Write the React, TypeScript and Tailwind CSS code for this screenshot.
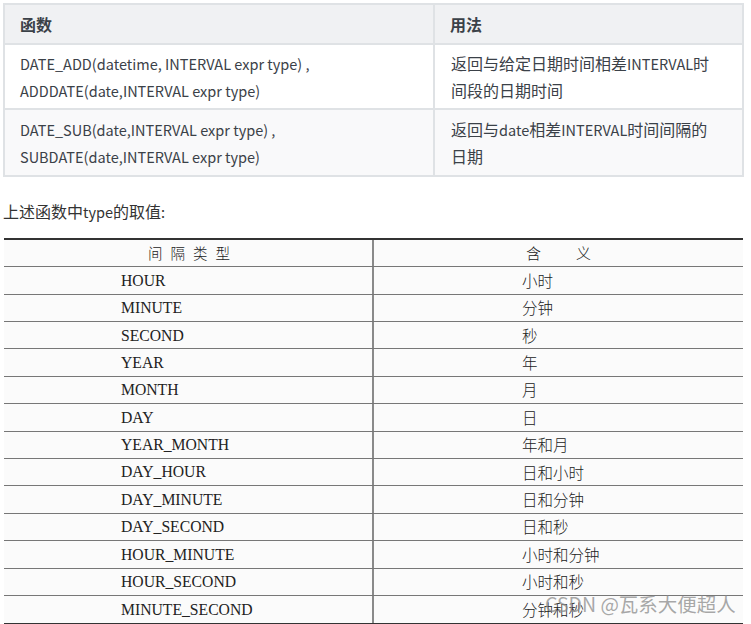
const usage = [
  {
    fn: ["DATE_ADD(datetime, INTERVAL expr type) ,", "ADDDATE(date,INTERVAL expr type)"],
    desc: ["返回与给定日期时间相差INTERVAL时", "间段的日期时间"],
    bg: "bg-white",
  },
  {
    fn: ["DATE_SUB(date,INTERVAL expr type) ,", "SUBDATE(date,INTERVAL expr type)"],
    desc: ["返回与date相差INTERVAL时间间隔的", "日期"],
    bg: "bg-[#f9f9fa]",
  },
];

const types: [string, string][] = [
  ["HOUR", "小时"],
  ["MINUTE", "分钟"],
  ["SECOND", "秒"],
  ["YEAR", "年"],
  ["MONTH", "月"],
  ["DAY", "日"],
  ["YEAR_MONTH", "年和月"],
  ["DAY_HOUR", "日和小时"],
  ["DAY_MINUTE", "日和分钟"],
  ["DAY_SECOND", "日和秒"],
  ["HOUR_MINUTE", "小时和分钟"],
  ["HOUR_SECOND", "小时和秒"],
  ["MINUTE_SECOND", "分钟和秒"],
];

const sans = { fontFamily: '"Noto Sans CJK SC", "Noto Sans", sans-serif' };
const serif = { fontFamily: '"Liberation Serif", "Noto Sans CJK SC", serif' };

// CJK glyphs render a touch larger than the latin ones in the source page
function Mixed({ text }: { text: string }) {
  const parts = text.match(/[\u3000-\u9fff]+|[^\u3000-\u9fff]+/g) ?? [];
  return (
    <>
      {parts.map((p, i) =>
        /[\u3000-\u9fff]/.test(p) ? (
          <span key={i} className="text-[16px]">{p}</span>
        ) : (
          <span key={i} className="text-[14.5px]">{p}</span>
        )
      )}
    </>
  );
}

export default function App() {
  return (
    <div className="relative w-[751px] h-[624px] bg-white overflow-hidden text-[#3b4148]" style={sans}>
      {/* function table */}
      <div className="ml-[3px] mt-[3px] w-[741px] border-2 border-[#dfe2e5]">
        <div className="grid grid-cols-[430px_1fr] bg-[#f0f1f3] h-[40px] border-b-2 border-[#dfe2e5] font-bold text-[16px]">
          <div className="pl-[15px] flex items-center border-r-2 border-[#dfe2e5]">函数</div>
          <div className="pl-[15px] flex items-center">用法</div>
        </div>
        {usage.map((row, i) => (
          <div
            key={i}
            className={`grid grid-cols-[430px_1fr] ${row.bg} h-[65px] ${i === 0 ? "border-b-2 border-[#dfe2e5]" : ""}`}
          >
            <div className="pl-[15px] flex flex-col justify-center leading-[26px] border-r-2 border-[#dfe2e5]">
              {row.fn.map((t) => (
                <div key={t}>
                  <Mixed text={t} />
                </div>
              ))}
            </div>
            <div className="pl-[16px] flex flex-col justify-center leading-[26px]">
              {row.desc.map((t) => (
                <div key={t}>
                  <Mixed text={t} />
                </div>
              ))}
            </div>
          </div>
        ))}
      </div>

      <p className="ml-[3px] mt-[22px] leading-[24px] text-[#333]">
        <Mixed text="上述函数中type的取值:" />
      </p>

      {/* type table */}
      <div className="ml-[4px] mt-[14px] w-[739px] border-t-2 border-b-[3px] border-[#333] text-[#222] bg-[#fbfbfb]">
        <div className="grid grid-cols-[370px_1fr] h-[27.3px] border-b border-[#777]">
          <div className="flex items-center justify-center border-r-2 border-[#8a8a8a] text-[14.5px] tracking-[8px] pl-[10px] font-light" style={sans}>
            间隔类型
          </div>
          <div className="flex items-center justify-center gap-[35px] text-[15px] font-light" style={sans}>
            <span>含</span>
            <span>义</span>
          </div>
        </div>
        {types.map(([k, v], i) => (
          <div
            key={k}
            className={`grid grid-cols-[370px_1fr] h-[27.4px] ${i < types.length - 1 ? "border-b border-[#777]" : ""}`}
          >
            <div className="flex items-center pl-[117px] border-r-2 border-[#8a8a8a] text-[15.7px]" style={serif}>
              {k}
            </div>
            <div className="flex items-center pl-[148px] text-[15.5px] font-light" style={sans}>
              {v}
            </div>
          </div>
        ))}
      </div>

      <div
        className="absolute left-[545px] top-[592px] text-[19.5px] leading-[24px] text-[#8c8c8c]/75 whitespace-nowrap"
        style={sans}
      >
        CSDN @瓦系大便超人
      </div>
    </div>
  );
}
